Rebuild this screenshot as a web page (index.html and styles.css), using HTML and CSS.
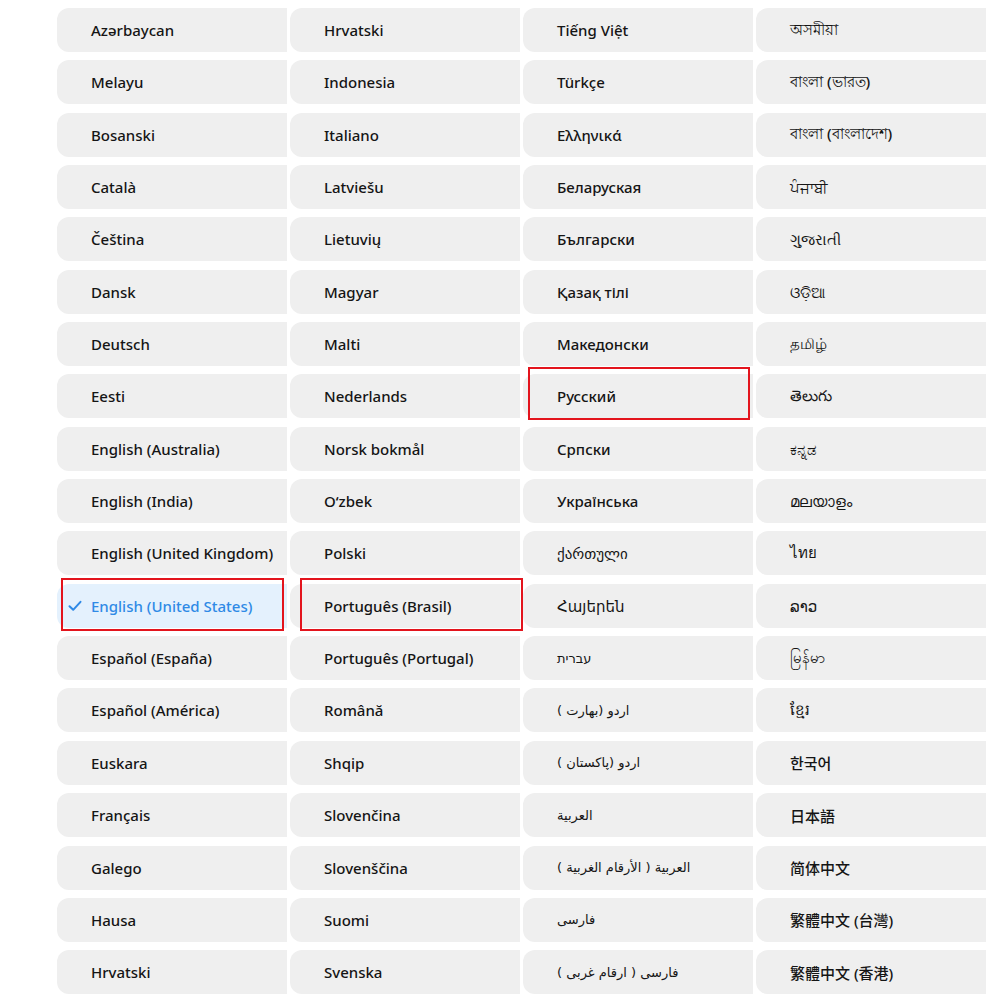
FILE: index.html
```html
<!DOCTYPE html>
<html>
<head>
<meta charset="utf-8">
<link rel="stylesheet" href="styles.css">
</head>
<body>
<div class="page">
  <div class="grid">
    <div class="cell">Azərbaycan</div>
    <div class="cell">Melayu</div>
    <div class="cell">Bosanski</div>
    <div class="cell">Català</div>
    <div class="cell">Čeština</div>
    <div class="cell">Dansk</div>
    <div class="cell">Deutsch</div>
    <div class="cell">Eesti</div>
    <div class="cell">English (Australia)</div>
    <div class="cell">English (India)</div>
    <div class="cell">English (United Kingdom)</div>
    <div class="cell selected"><svg class="check" viewBox="0 0 14 12" width="14" height="12"><path d="M1.5 6.2 L5.2 9.8 L12.5 1.8" fill="none" stroke="#2f8ae6" stroke-width="2" stroke-linecap="round" stroke-linejoin="round"/></svg>English (United States)</div>
    <div class="cell">Español (España)</div>
    <div class="cell">Español (América)</div>
    <div class="cell">Euskara</div>
    <div class="cell">Français</div>
    <div class="cell">Galego</div>
    <div class="cell">Hausa</div>
    <div class="cell">Hrvatski</div>

    <div class="cell">Hrvatski</div>
    <div class="cell">Indonesia</div>
    <div class="cell">Italiano</div>
    <div class="cell">Latviešu</div>
    <div class="cell">Lietuvių</div>
    <div class="cell">Magyar</div>
    <div class="cell">Malti</div>
    <div class="cell">Nederlands</div>
    <div class="cell">Norsk bokmål</div>
    <div class="cell">O‘zbek</div>
    <div class="cell">Polski</div>
    <div class="cell">Português (Brasil)</div>
    <div class="cell">Português (Portugal)</div>
    <div class="cell">Română</div>
    <div class="cell">Shqip</div>
    <div class="cell">Slovenčina</div>
    <div class="cell">Slovenščina</div>
    <div class="cell">Suomi</div>
    <div class="cell">Svenska</div>

    <div class="cell">Tiếng Việt</div>
    <div class="cell">Türkçe</div>
    <div class="cell">Ελληνικά</div>
    <div class="cell">Беларуская</div>
    <div class="cell">Български</div>
    <div class="cell">Қазақ тілі</div>
    <div class="cell">Македонски</div>
    <div class="cell">Русский</div>
    <div class="cell">Српски</div>
    <div class="cell">Українська</div>
    <div class="cell">ქართული</div>
    <div class="cell">Հայերեն</div>
    <div class="cell"><span class="rtl" dir="rtl">עברית</span></div>
    <div class="cell"><span class="rtl" dir="rtl">اردو (بھارت )</span></div>
    <div class="cell"><span class="rtl" dir="rtl">اردو (پاکستان )</span></div>
    <div class="cell"><span class="rtl" dir="rtl">العربية</span></div>
    <div class="cell"><span class="rtl" dir="rtl">العربية ( الأرقام الغربية )</span></div>
    <div class="cell"><span class="rtl" dir="rtl">فارسی</span></div>
    <div class="cell"><span class="rtl" dir="rtl">فارسی ( ارقام غربی )</span></div>

    <div class="cell">অসমীয়া</div>
    <div class="cell">বাংলা (ভারত)</div>
    <div class="cell">বাংলা (বাংলাদেশ)</div>
    <div class="cell">ਪੰਜਾਬੀ</div>
    <div class="cell">ગુજરાતી</div>
    <div class="cell">ଓଡ଼ିଆ</div>
    <div class="cell">தமிழ்</div>
    <div class="cell">తెలుగు</div>
    <div class="cell">ಕನ್ನಡ</div>
    <div class="cell">മലയാളം</div>
    <div class="cell">ไทย</div>
    <div class="cell">ລາວ</div>
    <div class="cell">မြန်မာ</div>
    <div class="cell">ខ្មែរ</div>
    <div class="cell">한국어</div>
    <div class="cell">日本語</div>
    <div class="cell">简体中文</div>
    <div class="cell">繁體中文 (台灣)</div>
    <div class="cell">繁體中文 (香港)</div>
  </div>
  <div class="mark mark-en"></div>
  <div class="mark mark-pt"></div>
  <div class="mark mark-ru"></div>
</div>
</body>
</html>
```

FILE: styles.css
```css
html, body {
  margin: 0;
  padding: 0;
  background: #ffffff;
}

.page {
  position: relative;
  width: 1000px;
  height: 1000px;
  padding: 8px 0 0 57px;
  box-sizing: border-box;
  font-family: "Noto Sans", "DejaVu Sans", "Noto Sans CJK SC", sans-serif;
}

.grid {
  display: grid;
  grid-auto-flow: column;
  grid-template-rows: repeat(19, 44px);
  grid-template-columns: repeat(4, 230px);
  row-gap: 8.35px;
  column-gap: 3px;
}

.cell {
  display: flex;
  align-items: center;
  padding-left: 34px;
  background: #efefef;
  border-radius: 12px 0 0 12px;
  font-size: 15px;
  font-weight: 500;
  color: #151515;
  white-space: nowrap;
  position: relative;
}

.cell.selected {
  background: #e4f1fd;
  color: #2f8ae6;
}

.check {
  position: absolute;
  left: 11px;
  top: 16px;
}

.rtl {
  font-family: "DejaVu Sans", "Noto Sans", sans-serif;
  font-size: 13px;
  font-weight: 400;
  unicode-bidi: isolate;
}

.mark {
  position: absolute;
  border: 2.5px solid #e3141d;
  box-sizing: border-box;
}

.mark-en {
  left: 61px;
  top: 578px;
  width: 223px;
  height: 53px;
}

.mark-pt {
  left: 300px;
  top: 578px;
  width: 223px;
  height: 53px;
}

.mark-ru {
  left: 528px;
  top: 367px;
  width: 222px;
  height: 53px;
}
```
